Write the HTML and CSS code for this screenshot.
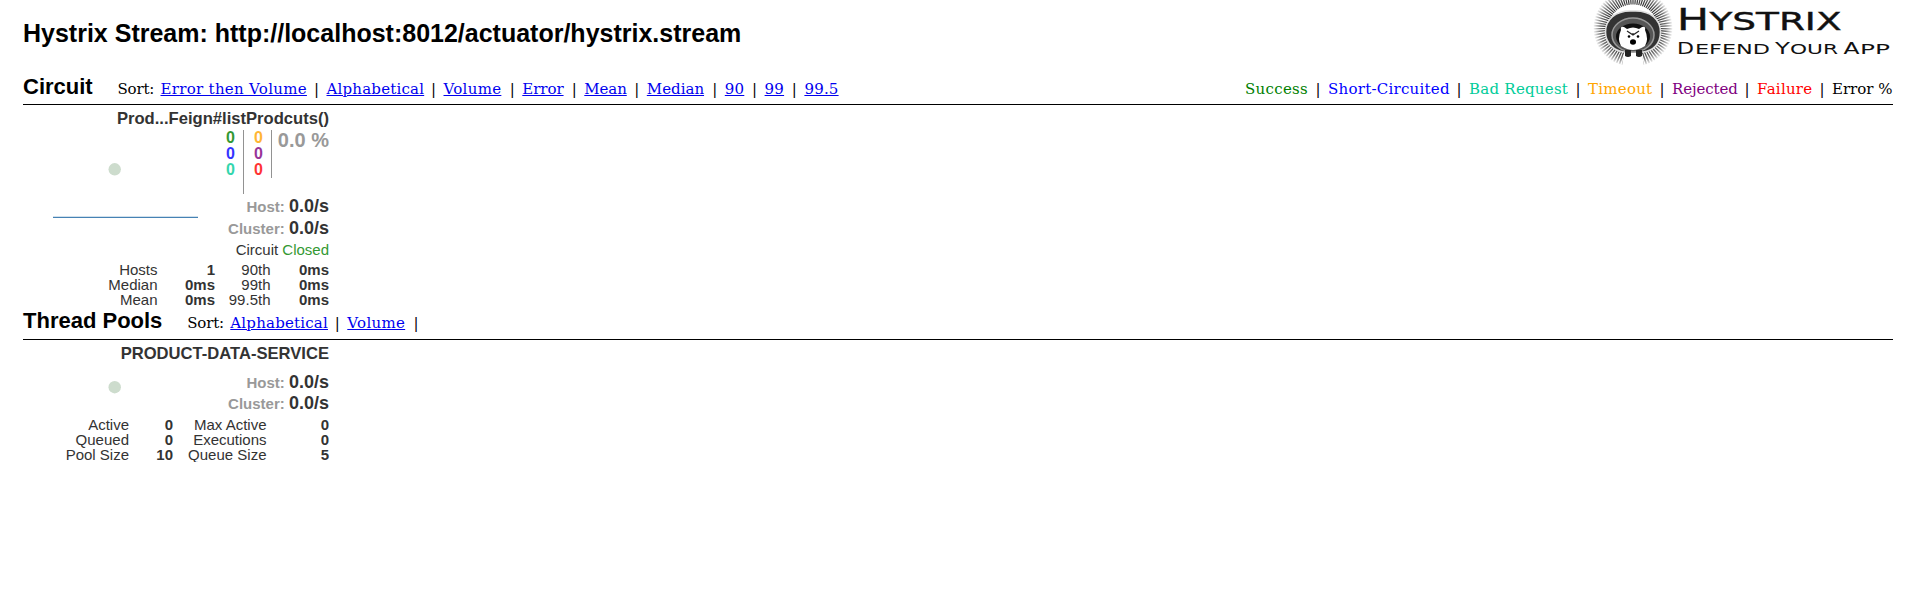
FILE: index.html
```
<!DOCTYPE html>
<html lang="en">
<head>
<meta charset="utf-8">
<title>Hystrix Monitor</title>
<link rel="stylesheet" href="styles.css">
</head>
<body>
<header class="header">
  <h1 class="title">Hystrix Stream: http://localhost:8012/actuator/hystrix.stream</h1>
  <svg class="logo" viewBox="0 0 310 70" width="310" height="70">
    <defs>
      <radialGradient id="quills" gradientUnits="userSpaceOnUse" cx="43" cy="28" r="40">
        <stop offset="0.65" stop-color="#333"/>
        <stop offset="0.82" stop-color="#777"/>
        <stop offset="1" stop-color="#fff"/>
      </radialGradient>
    </defs>
    <ellipse cx="43" cy="28" rx="32" ry="31" fill="none" stroke="url(#quills)" stroke-width="15" stroke-dasharray="1.4 1.1"/>
    <path d="M34 53H52L54 68H32Z" fill="#fff"/>
    <path d="M43 11C25 10 15.500 20 15.500 32C15.500 44 25 51 34 52H53C63 51 70.500 44 70.500 32C70.500 20 61 10 43 11Z" fill="#333" stroke="#ddd" stroke-width="1.6"/>
    <ellipse cx="43" cy="35" rx="21" ry="17" fill="#555" stroke="#999" stroke-width="1.500"/>
    <ellipse cx="43" cy="36.500" rx="17" ry="13" fill="#111"/>
    <path d="M31 30Q30 26 34 27L37 29Q43 26 49 29L52 27Q56 26 55 30Q59 39 55 46Q49 50 43 50Q37 50 31 46Q27 39 31 30Z" fill="#fff"/>
    <path d="M37 31L43 35L49 31M43 35V33" fill="none" stroke="#222" stroke-width="1.2"/>
    <circle cx="39" cy="36.500" r="1.300"/><circle cx="48" cy="36.500" r="1.300"/>
    <ellipse cx="43" cy="42" rx="3" ry="2.800"/>
    <path d="M35 50H41V56Q38 58 35 56ZM46 50H52V56Q49 58 46 56Z" fill="#222"/>
    <g class="logo-text">
      <text class="big" x="87" y="29.500" font-size="30" textLength="32" lengthAdjust="spacingAndGlyphs">H</text>
      <text class="big" x="119.500" y="29.500" font-size="25.500" textLength="132" lengthAdjust="spacingAndGlyphs">YSTRIX</text>
      <text x="87" y="54.300" font-size="16.500" textLength="17" lengthAdjust="spacingAndGlyphs">D</text>
      <text x="105" y="54.300" font-size="14" textLength="75" lengthAdjust="spacingAndGlyphs">EFEND</text>
      <text x="185" y="54.300" font-size="16.500" textLength="15" lengthAdjust="spacingAndGlyphs">Y</text>
      <text x="200" y="54.300" font-size="14" textLength="48" lengthAdjust="spacingAndGlyphs">OUR</text>
      <text x="253.500" y="54.300" font-size="16.500" textLength="16" lengthAdjust="spacingAndGlyphs">A</text>
      <text x="270" y="54.300" font-size="14" textLength="30" lengthAdjust="spacingAndGlyphs">PP</text>
    </g>
  </svg>
</header>
<main class="content">
  <section class="section circuits">
    <div class="bar">
      <h2 class="bar-title">Circuit</h2>
      <nav class="sort"><span class="w37">Sort:</span><a class="w146 first" href="#">Error then Volume</a><i>|</i><a class="w97" href="#">Alphabetical</a><i>|</i><a class="w59" href="#">Volume</a><i>|</i><a class="w42" href="#">Error</a><i>|</i><a class="w43" href="#">Mean</a><i>|</i><a class="w58" href="#">Median</a><i>|</i><a class="w20" href="#">90</a><i>|</i><a class="w20" href="#">99</a><i>|</i><a class="w35" href="#">99.5</a></nav>
      <div class="legend"><span class="success">Success</span><i>|</i><span class="short">Short-Circuited</span><i>|</i><span class="bad">Bad Request</span><i>|</i><span class="timeout">Timeout</span><i>|</i><span class="rejected">Rejected</span><i>|</i><span class="failure">Failure</span><i>|</i><span class="error">Error %</span></div>
    </div>
    <article class="monitor">
      <h3 class="name">Prod...Feign#listProdcuts()</h3>
      <div class="health">
        <svg class="chart" width="180" height="100" viewBox="0 0 180 100">
          <circle cx="91.700" cy="39.300" r="6.200" fill="#cddccd"/>
          <path d="M30 87.300H175" stroke="#4682b4" stroke-width="1.200"/>
        </svg>
        <div class="counts left"><b class="success">0</b><b class="short">0</b><b class="bad">0</b></div>
        <div class="counts right"><b class="timeout">0</b><b class="rejected">0</b><b class="failure">0</b></div>
        <div class="percent">0.0 %</div>
      </div>
      <div class="rates">
        <p>Host: <b>0.0/s</b></p>
        <p>Cluster: <b>0.0/s</b></p>
      </div>
      <p class="status">Circuit <span>Closed</span></p>
      <div class="table">
        <span>Hosts</span><b>1</b><span>90th</span><b>0ms</b>
        <span>Median</span><b>0ms</b><span>99th</span><b>0ms</b>
        <span>Mean</span><b>0ms</b><span>99.5th</span><b>0ms</b>
      </div>
    </article>
  </section>
  <section class="section pools">
    <div class="bar">
      <h2 class="bar-title">Thread Pools</h2>
      <nav class="sort"><span class="w37">Sort:</span><a class="w97 first" href="#">Alphabetical</a><i>|</i><a class="w59" href="#">Volume</a><i>|</i></nav>
    </div>
    <article class="monitor">
      <h3 class="name">PRODUCT-DATA-SERVICE</h3>
      <div class="pool-health">
        <svg width="180" height="52" viewBox="0 0 180 52"><circle cx="91.700" cy="22.200" r="6.200" fill="#cddccd"/></svg>
        <div class="rates">
          <p>Host: <b>0.0/s</b></p>
          <p>Cluster: <b>0.0/s</b></p>
        </div>
      </div>
      <div class="table pool-table">
        <span>Active</span><b>0</b><span>Max Active</span><b>0</b>
        <span>Queued</span><b>0</b><span>Executions</span><b>0</b>
        <span>Pool Size</span><b>10</b><span>Queue Size</span><b>5</b>
      </div>
    </article>
  </section>
</main>
</body>
</html>
```

FILE: styles.css
```
* { box-sizing: border-box; }
body { margin: 0; background: #fff; color: #000; font-family: "Liberation Sans", Arial, sans-serif; }
h1, h2, h3, p { margin: 0; }
.header { display: flex; justify-content: space-between; height: 72px; padding: 0 14px 0 23px; overflow: hidden; }
.title { font-size: 25px; line-height: 28px; margin-top: 19px; }
.logo { display: block; flex: none; margin-right: -7px; }
.logo-text { font-family: "DejaVu Sans", sans-serif; fill: #111; }
.big { stroke: #111; stroke-width: 0.4px; }
.content { padding: 0 14px 0 23px; }
.bar { display: flex; align-items: baseline; height: 33px; padding-top: 1px; border-bottom: 1px solid #000; }
.pools .bar { padding-top: 0; }
.bar-title { font-size: 22px; line-height: 28px; width: 94.5px; white-space: nowrap; }
.pools .bar-title { width: 164.3px; }
.sort, .legend { display: flex; font: 15px/20px "DejaVu Serif", serif; white-space: nowrap; letter-spacing: 0.2px; }
.legend { margin-left: auto; }
.bar i { width: 20px; text-align: center; font-style: normal; letter-spacing: 0; }
.sort a { color: #00e; text-decoration: underline; }
.first { margin-left: 6px; }
.w37 { width: 37px; letter-spacing: -0.2px; }
.w146 { width: 146px; letter-spacing: 0.3px; }
.w97 { width: 97px; }
.w59 { width: 58.8px; letter-spacing: 0.3px; }
.w42 { width: 42px; letter-spacing: -0.05px; }
.w43 { width: 42.5px; letter-spacing: -0.1px; }
.w58 { width: 58px; letter-spacing: 0; }
.w20 { width: 19.8px; letter-spacing: 0.2px; }
.w35 { width: 35px; letter-spacing: 0.2px; }
.legend .success { width: 63px; letter-spacing: 0.3px; }
.legend .short { width: 121px; letter-spacing: 0.25px; }
.legend .bad { width: 99px; letter-spacing: 0.25px; }
.legend .timeout { width: 64px; letter-spacing: 0.25px; }
.legend .rejected { width: 65px; letter-spacing: -0.1px; }
.legend .failure { width: 55px; letter-spacing: 0.25px; }
.legend .error { width: 61px; letter-spacing: 0; }
.success { color: green; }
.short { color: blue; }
.bad { color: #00cc99; }
.timeout { color: orange; }
.rejected { color: purple; }
.failure { color: red; }
.monitor { width: 306px; color: #333; }
.circuits .monitor { height: 202px; }
.name { height: 25px; font-size: 16.6px; line-height: 27px; text-align: right; white-space: nowrap; }
.health { display: flex; height: 65px; }
.chart { flex: none; }
.counts { display: flex; flex-direction: column; font-size: 16px; line-height: 16px; text-align: right; opacity: 0.8; border-right: 1px solid #777; }
.left { width: 41px; height: 64px; padding-right: 8px; }
.right { width: 28px; height: 48px; padding-right: 8px; }
.percent { flex: 1; color: #999; font-size: 20px; font-weight: bold; line-height: 20px; text-align: right; white-space: nowrap; }
.rates { text-align: right; font-size: 15px; font-weight: bold; line-height: 22px; color: #999; }
.rates p { height: 21.8px; }
.rates b { font-size: 18px; color: #333; }
.status { font-size: 15px; line-height: 18px; height: 21px; margin-top: 2.4px; text-align: right; }
.status span { color: #339933; }
.table { display: grid; grid-template-columns: 134.5px 57.500px 55.500px 58.500px; font-size: 15px; line-height: 15px; text-align: right; }
.pool-health { display: flex; }
.pool-health .rates { flex: 1; line-height: 21px; padding-top: 7px; }
.pool-health .rates p { height: 21px; }
.pool-table { grid-template-columns: 106px 44px 93.500px 62.500px; }
```
